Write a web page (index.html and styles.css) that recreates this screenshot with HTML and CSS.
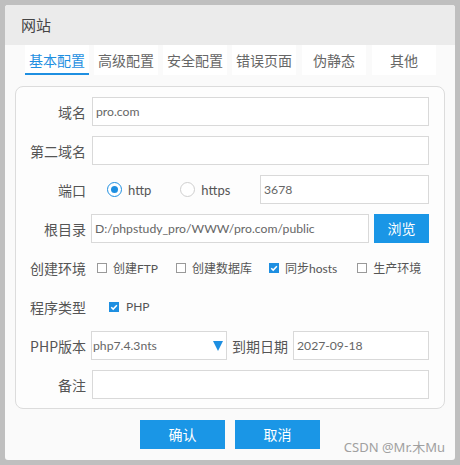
FILE: index.html
```html
<!DOCTYPE html>
<html lang="zh">
<head>
<meta charset="utf-8">
<title>网站</title>
<link rel="stylesheet" href="styles.css">
</head>
<body>
<div class="dialog">
  <div class="title">网站</div>
  <div class="tabs">
    <div class="tab active">基本配置</div>
    <div class="tab">高级配置</div>
    <div class="tab">安全配置</div>
    <div class="tab">错误页面</div>
    <div class="tab">伪静态</div>
    <div class="tab">其他</div>
  </div>
  <div class="panel">
    <div class="row">
      <label class="lbl">域名</label>
      <div class="input">pro.com</div>
    </div>
    <div class="row">
      <label class="lbl">第二域名</label>
      <div class="input"></div>
    </div>
    <div class="row">
      <label class="lbl">端口</label>
      <div class="radios">
        <span class="radio checked"></span><span class="rtext">http</span>
        <span class="radio second"></span><span class="rtext">https</span>
      </div>
      <div class="input port">3678</div>
    </div>
    <div class="row">
      <label class="lbl">根目录</label>
      <div class="input path">D:/phpstudy_pro/WWW/pro.com/public</div>
      <div class="btn browse">浏览</div>
    </div>
    <div class="row">
      <label class="lbl">创建环境</label>
      <div class="checks">
        <span class="cb"></span><span class="ctext">创建FTP</span>
        <span class="cb c2"></span><span class="ctext">创建数据库</span>
        <span class="cb checked c3"><svg viewBox="0 0 10 10" width="10" height="10"><path d="M2.2 5.2 L4.2 7.1 L7.9 3.2" fill="none" stroke="#fff" stroke-width="1.5"/></svg></span><span class="ctext">同步hosts</span>
        <span class="cb c4"></span><span class="ctext">生产环境</span>
      </div>
    </div>
    <div class="row">
      <label class="lbl">程序类型</label>
      <div class="checks php">
        <span class="cb checked"><svg viewBox="0 0 10 10" width="10" height="10"><path d="M2.2 5.2 L4.2 7.1 L7.9 3.2" fill="none" stroke="#fff" stroke-width="1.5"/></svg></span><span class="ctext">PHP</span>
      </div>
    </div>
    <div class="row">
      <label class="lbl">PHP版本</label>
      <div class="input select">php7.4.3nts<span class="tri"></span></div>
      <label class="lbl2">到期日期</label>
      <div class="input date">2027-09-18</div>
    </div>
    <div class="row">
      <label class="lbl">备注</label>
      <div class="input"></div>
    </div>
  </div>
  <div class="actions">
    <div class="btn big">确认</div>
    <div class="btn big">取消</div>
  </div>
  <div class="watermark">CSDN @Mr.木Mu</div>
</div>
</body>
</html>
```
FILE: styles.css
```css
* { box-sizing: border-box; }
html, body { margin: 0; padding: 0; }
body {
  background: #bfbfbf;
  width: 460px;
  height: 465px;
  padding: 5px;
  font-family: "Noto Sans", "Noto Sans CJK SC", sans-serif;
  color: #555;
}
.dialog {
  position: relative;
  width: 450px;
  height: 455px;
  background: #fafafa;
  border-radius: 3px;
  overflow: hidden;
}
.title {
  height: 40px;
  background: #ebebeb;
  padding-left: 16px;
  font-size: 15px;
  line-height: 40px;
  color: #444;
  font-family: "Noto Sans CJK SC", sans-serif;
}
.tabs {
  display: flex;
  gap: 5px;
  padding-left: 20px;
  height: 30px;
}
.tab {
  width: 64px;
  height: 30px;
  background: #fff;
  text-align: center;
  font-size: 14px;
  line-height: 31px;
  color: #666;
  font-family: "Noto Sans CJK SC", sans-serif;
}
.tab:nth-child(5), .tab:nth-child(6) { margin-left: 1px; }
.tab.active {
  color: #1e8fe1;
  border-bottom: 2px solid #1e8fe1;
  line-height: 30px;
}
.panel {
  margin: 11px 10px 0 10px;
  height: 323px;
  border: 1px solid #dcdcdc;
  border-radius: 8px;
  padding: 10px 15px 0 0;
  display: flex;
  flex-direction: column;
  gap: 10px;
  background: #fdfdfd;
}
.row {
  display: flex;
  align-items: center;
  height: 29px;
}
.lbl {
  width: 70px;
  text-align: right;
  font-size: 14px;
  color: #555;
  font-family: "Noto Sans CJK SC", sans-serif;
  margin-right: 6px;
  flex: none;
}
.input {
  flex: 1;
  height: 29px;
  border: 1px solid #d9d9d9;
  background: #fff;
  font-family: "Lato", "Noto Sans CJK SC", sans-serif;
  font-size: 12.2px;
  line-height: 27px;
  padding-left: 3px;
  color: #666;
  white-space: nowrap;
  overflow: hidden;
}
.radios {
  display: flex;
  align-items: center;
  width: 168px;
  flex: none;
  font-family: "Lato", sans-serif;
  font-size: 13px;
}
.radio {
  width: 15px;
  height: 15px;
  border-radius: 50%;
  border: 1px solid #cfcfcf;
  background: #fff;
  margin-left: 15px;
  flex: none;
  position: relative;
}
.radio.checked { border-color: #1e8fe1; }
.radio.checked::after {
  content: "";
  position: absolute;
  left: 3px; top: 3px;
  width: 7px; height: 7px;
  border-radius: 50%;
  background: #1e8fe1;
}
.radio.second { margin-left: 29px; }
.rtext { margin-left: 6px; color: #555; }
.port { flex: none; width: 169px; }
.path { flex: none; width: 278px; margin-left: -1px; }
.btn {
  background: #1a96e6;
  color: #fff;
  text-align: center;
  font-family: "Noto Sans CJK SC", sans-serif;
  font-size: 14px;
}
.browse {
  width: 55px;
  height: 29px;
  line-height: 29px;
  margin-left: 5px;
}
.checks {
  display: flex;
  align-items: center;
  font-size: 12px;
  font-family: "Lato", "Noto Sans CJK SC", sans-serif;
  color: #555;
}
.cb {
  width: 10px;
  height: 10px;
  border: 1px solid #999;
  background: #fff;
  flex: none;
  margin-left: 5px;
  display: flex;
}
.cb.checked { background: #1e8fe1; border-color: #1e8fe1; }
.cb svg { display: block; margin: -1px; }
.ctext { margin-left: 6px; }
.cb.c2 { margin-left: 18px; }
.cb.c3 { margin-left: 17px; }
.cb.c4 { margin-left: 20px; }
.checks.php .cb { margin-left: 17px; }
.checks.php .ctext { margin-left: 7px; }
.select {
  flex: none;
  width: 136px;
  margin-left: -1px;
  position: relative;
  padding-left: 1px;
}
.tri {
  position: absolute;
  right: 3px;
  top: 9px;
  width: 0; height: 0;
  border-left: 5.5px solid transparent;
  border-right: 5.5px solid transparent;
  border-top: 10px solid #1e8fe1;
}
.lbl2 {
  font-size: 14px;
  margin: 0 5px 0 5px;
  color: #555;
  font-family: "Noto Sans CJK SC", sans-serif;
  flex: none;
}
.date { flex: none; width: 136px; }
.actions {
  display: flex;
  justify-content: center;
  gap: 10px;
  margin-top: 11px;
}
.btn.big {
  width: 85px;
  height: 29px;
  line-height: 29px;
}
.watermark {
  position: absolute;
  right: 10px;
  bottom: 4px;
  font-size: 13px;
  color: #a0a0a0;
  font-family: "Noto Sans", "Noto Sans CJK SC", sans-serif;
}
```
